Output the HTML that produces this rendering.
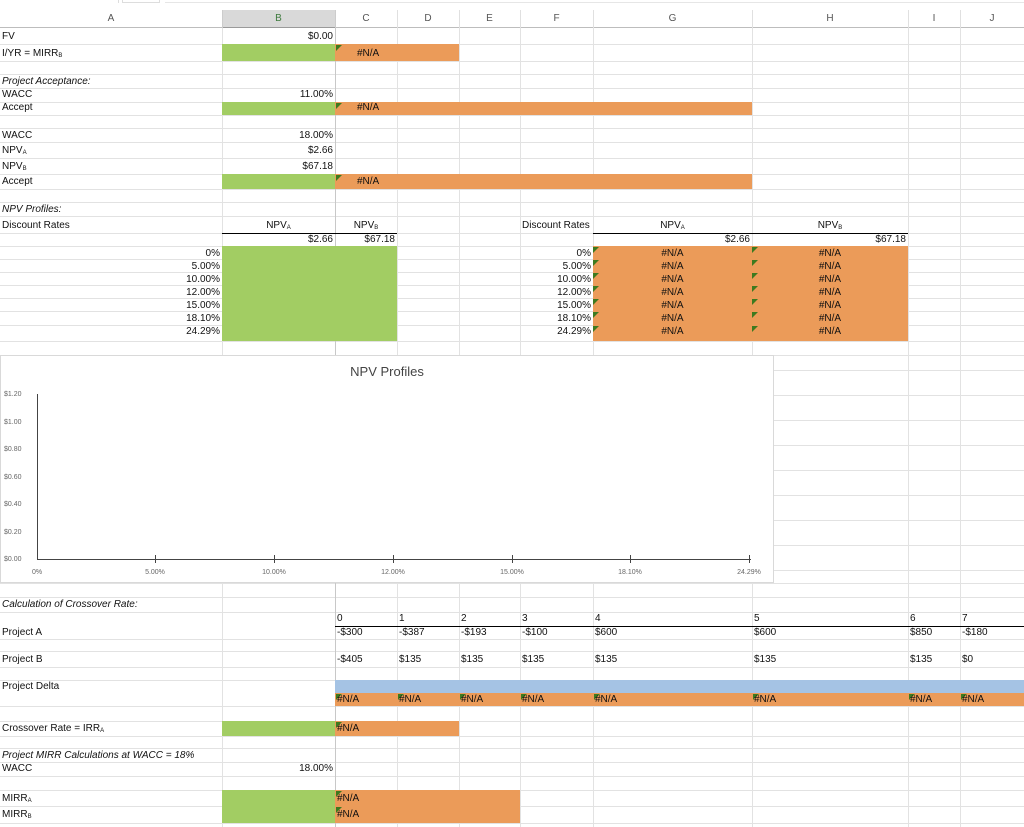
<!DOCTYPE html>
<html><head><meta charset="utf-8"><style>
*{margin:0;padding:0;box-sizing:border-box}
body{width:1024px;height:827px;overflow:hidden;background:#fff;font-family:"Liberation Sans",Arial,sans-serif;font-size:10px;color:#111;position:relative}
div{position:absolute}
.h{left:0;width:1024px;height:1px;background:#e2e2e2}
.v{width:1px;background:#e2e2e2;top:28px;height:799px}
.t{white-space:nowrap;line-height:12px}
.r{text-align:right}
.g{background:#a2cd63}
.o{background:#eb9b59}
.tri{width:0;height:0;border-top:6px solid #3d7a1f;border-right:6px solid transparent}
.i{font-style:italic}
sub{font-size:6px;vertical-align:-1px}
.ax{font-size:7px;color:#666}
</style></head><body>
<div style="left:0;top:0;width:1024px;height:10px;background:#fff"></div>
<div style="left:118px;top:0;width:1px;height:3px;background:#ddd"></div>
<div style="left:122px;top:0;width:38px;height:3px;border:1px solid #ddd;border-top:none"></div>
<div style="left:165px;top:2px;width:859px;height:1px;background:#e6e6e6"></div>
<div style="left:0;top:10px;width:1024px;height:18px;border-bottom:1px solid #bdbdbd"></div>
<div style="left:222px;top:10px;width:113px;height:18px;background:#d9d9d9;border-bottom:1px solid #9a9a9a"></div>
<div class="t" style="left:0;top:13px;width:222px;text-align:center;color:#555">A</div>
<div class="t" style="left:222px;top:13px;width:113px;text-align:center;color:#3d7a3d">B</div>
<div class="t" style="left:335px;top:13px;width:62px;text-align:center;color:#555">C</div>
<div class="t" style="left:397px;top:13px;width:62px;text-align:center;color:#555">D</div>
<div class="t" style="left:459px;top:13px;width:61px;text-align:center;color:#555">E</div>
<div class="t" style="left:520px;top:13px;width:73px;text-align:center;color:#555">F</div>
<div class="t" style="left:593px;top:13px;width:159px;text-align:center;color:#555">G</div>
<div class="t" style="left:752px;top:13px;width:156px;text-align:center;color:#555">H</div>
<div class="t" style="left:908px;top:13px;width:52px;text-align:center;color:#555">I</div>
<div class="t" style="left:960px;top:13px;width:64px;text-align:center;color:#555">J</div>
<div style="left:222px;top:10px;width:1px;height:18px;background:#ccc"></div>
<div style="left:335px;top:10px;width:1px;height:18px;background:#ccc"></div>
<div style="left:397px;top:10px;width:1px;height:18px;background:#e0e0e0"></div>
<div style="left:459px;top:10px;width:1px;height:18px;background:#e0e0e0"></div>
<div style="left:520px;top:10px;width:1px;height:18px;background:#e0e0e0"></div>
<div style="left:593px;top:10px;width:1px;height:18px;background:#e0e0e0"></div>
<div style="left:752px;top:10px;width:1px;height:18px;background:#e0e0e0"></div>
<div style="left:908px;top:10px;width:1px;height:18px;background:#e0e0e0"></div>
<div style="left:960px;top:10px;width:1px;height:18px;background:#e0e0e0"></div>

<div class="h" style="top:44px"></div><div class="h" style="top:61px"></div><div class="h" style="top:74px"></div><div class="h" style="top:88px"></div><div class="h" style="top:102px"></div><div class="h" style="top:115px"></div><div class="h" style="top:128px"></div><div class="h" style="top:142px"></div><div class="h" style="top:158px"></div><div class="h" style="top:174px"></div><div class="h" style="top:189px"></div><div class="h" style="top:202px"></div><div class="h" style="top:216px"></div><div class="h" style="top:233px"></div><div class="h" style="top:246px"></div><div class="h" style="top:259px"></div><div class="h" style="top:272px"></div><div class="h" style="top:285px"></div><div class="h" style="top:298px"></div><div class="h" style="top:311px"></div><div class="h" style="top:325px"></div><div class="h" style="top:341px"></div><div class="h" style="top:355px"></div><div class="h" style="top:370px"></div><div class="h" style="top:395px"></div><div class="h" style="top:420px"></div><div class="h" style="top:445px"></div><div class="h" style="top:470px"></div><div class="h" style="top:495px"></div><div class="h" style="top:520px"></div><div class="h" style="top:545px"></div><div class="h" style="top:570px"></div><div class="h" style="top:583px"></div><div class="h" style="top:597px"></div><div class="h" style="top:612px"></div><div class="h" style="top:639px"></div><div class="h" style="top:651px"></div><div class="h" style="top:667px"></div><div class="h" style="top:680px"></div><div class="h" style="top:706px"></div><div class="h" style="top:721px"></div><div class="h" style="top:736px"></div><div class="h" style="top:748px"></div><div class="h" style="top:762px"></div><div class="h" style="top:776px"></div><div class="h" style="top:790px"></div><div class="h" style="top:806px"></div><div class="h" style="top:823px"></div>
<div class="v" style="left:222px"></div><div class="v" style="left:335px;background:#c8c8c8"></div><div class="v" style="left:397px"></div><div class="v" style="left:459px"></div><div class="v" style="left:520px"></div><div class="v" style="left:593px"></div><div class="v" style="left:752px"></div><div class="v" style="left:908px"></div><div class="v" style="left:960px"></div>

<div class="g" style="left:222px;top:44px;width:113px;height:17px"></div>
<div class="o" style="left:335px;top:44px;width:124px;height:17px"></div>
<div class="g" style="left:222px;top:102px;width:113px;height:13px"></div>
<div class="o" style="left:335px;top:102px;width:417px;height:13px"></div>
<div class="g" style="left:222px;top:174px;width:113px;height:15px"></div>
<div class="o" style="left:335px;top:174px;width:417px;height:15px"></div>
<div class="g" style="left:222px;top:246px;width:175px;height:95px"></div>
<div class="o" style="left:593px;top:246px;width:315px;height:95px"></div>
<div style="left:335px;top:680px;width:689px;height:13px;background:#a5c3e4"></div>
<div class="o" style="left:335px;top:693px;width:689px;height:13px"></div>
<div class="g" style="left:222px;top:721px;width:113px;height:15px"></div>
<div class="o" style="left:335px;top:721px;width:124px;height:15px"></div>
<div class="g" style="left:222px;top:790px;width:113px;height:33px"></div>
<div class="o" style="left:335px;top:790px;width:185px;height:33px"></div>

<div class="tri" style="left:336px;top:45px"></div>
<div class="tri" style="left:336px;top:103px"></div>
<div class="tri" style="left:336px;top:175px"></div>
<div class="tri" style="left:593px;top:247px"></div><div class="tri" style="left:593px;top:260px"></div><div class="tri" style="left:593px;top:273px"></div><div class="tri" style="left:593px;top:286px"></div><div class="tri" style="left:593px;top:299px"></div><div class="tri" style="left:593px;top:312px"></div><div class="tri" style="left:593px;top:326px"></div>
<div class="tri" style="left:752px;top:247px"></div><div class="tri" style="left:752px;top:260px"></div><div class="tri" style="left:752px;top:273px"></div><div class="tri" style="left:752px;top:286px"></div><div class="tri" style="left:752px;top:299px"></div><div class="tri" style="left:752px;top:312px"></div><div class="tri" style="left:752px;top:326px"></div>
<div class="tri" style="left:336px;top:694px"></div><div class="tri" style="left:398px;top:694px"></div><div class="tri" style="left:460px;top:694px"></div><div class="tri" style="left:521px;top:694px"></div><div class="tri" style="left:594px;top:694px"></div><div class="tri" style="left:753px;top:694px"></div><div class="tri" style="left:909px;top:694px"></div><div class="tri" style="left:961px;top:694px"></div>
<div class="tri" style="left:336px;top:722px"></div><div class="tri" style="left:336px;top:791px"></div><div class="tri" style="left:336px;top:807px"></div>

<div style="left:222px;top:233px;width:175px;height:1px;background:#000"></div>
<div style="left:593px;top:233px;width:315px;height:1px;background:#000"></div>
<div style="left:335px;top:626px;width:689px;height:1px;background:#000"></div>

<div class="t" style="left:2px;top:31px">FV</div>
<div class="t" style="left:2px;top:48px">I/YR = MIRR<sub>B</sub></div>
<div class="t i" style="left:2px;top:76px">Project Acceptance:</div>
<div class="t" style="left:2px;top:89px">WACC</div>
<div class="t" style="left:2px;top:102px">Accept</div>
<div class="t" style="left:2px;top:130px">WACC</div>
<div class="t" style="left:2px;top:145px">NPV<sub>A</sub></div>
<div class="t" style="left:2px;top:161px">NPV<sub>B</sub></div>
<div class="t" style="left:2px;top:176px">Accept</div>
<div class="t i" style="left:2px;top:204px">NPV Profiles:</div>
<div class="t" style="left:2px;top:220px">Discount Rates</div>
<div class="t i" style="left:2px;top:599px">Calculation of Crossover Rate:</div>
<div class="t" style="left:2px;top:627px">Project A</div>
<div class="t" style="left:2px;top:654px">Project B</div>
<div class="t" style="left:2px;top:681px">Project Delta</div>
<div class="t" style="left:2px;top:723px">Crossover Rate = IRR<sub>A</sub></div>
<div class="t i" style="left:2px;top:750px">Project MIRR Calculations at WACC = 18%</div>
<div class="t" style="left:2px;top:763px">WACC</div>
<div class="t" style="left:2px;top:793px">MIRR<sub>A</sub></div>
<div class="t" style="left:2px;top:809px">MIRR<sub>B</sub></div>

<div class="t r" style="left:222px;width:111px;top:31px">$0.00</div>
<div class="t r" style="left:222px;width:111px;top:89px">11.00%</div>
<div class="t r" style="left:222px;width:111px;top:130px">18.00%</div>
<div class="t r" style="left:222px;width:111px;top:145px">$2.66</div>
<div class="t r" style="left:222px;width:111px;top:161px">$67.18</div>
<div class="t" style="left:222px;width:113px;top:220px;text-align:center">NPV<sub>A</sub></div>
<div class="t" style="left:335px;width:62px;top:220px;text-align:center">NPV<sub>B</sub></div>
<div class="t r" style="left:222px;width:111px;top:234px">$2.66</div>
<div class="t r" style="left:335px;width:60px;top:234px">$67.18</div>
<div class="t r" style="left:222px;width:111px;top:763px">18.00%</div>

<div class="t" style="left:357px;top:48px">#N/A</div>
<div class="t" style="left:357px;top:102px">#N/A</div>
<div class="t" style="left:357px;top:176px">#N/A</div>

<div class="t r" style="left:100px;width:120px;top:247px;line-height:13px">0%<br>5.00%<br>10.00%<br>12.00%<br>15.00%<br>18.10%<br>24.29%</div>
<div class="t" style="left:522px;top:220px">Discount Rates</div>
<div class="t" style="left:593px;width:159px;top:220px;text-align:center">NPV<sub>A</sub></div>
<div class="t" style="left:752px;width:156px;top:220px;text-align:center">NPV<sub>B</sub></div>
<div class="t r" style="left:593px;width:157px;top:234px">$2.66</div>
<div class="t r" style="left:752px;width:154px;top:234px">$67.18</div>
<div class="t r" style="left:480px;width:111px;top:247px;line-height:13px">0%<br>5.00%<br>10.00%<br>12.00%<br>15.00%<br>18.10%<br>24.29%</div>
<div class="t" style="left:593px;width:159px;top:247px;line-height:13px;text-align:center">#N/A<br>#N/A<br>#N/A<br>#N/A<br>#N/A<br>#N/A<br>#N/A</div>
<div class="t" style="left:752px;width:156px;top:247px;line-height:13px;text-align:center">#N/A<br>#N/A<br>#N/A<br>#N/A<br>#N/A<br>#N/A<br>#N/A</div>

<div style="left:0;top:355px;width:774px;height:228px;background:#fff;border:1px solid #d9d9d9"></div>
<div class="t" style="left:0;width:774px;top:366px;text-align:center;font-size:13px;color:#444">NPV Profiles</div>
<div style="left:37px;top:394px;width:1px;height:166px;background:#444"></div>
<div style="left:37px;top:559px;width:714px;height:1px;background:#444"></div>
<div class="t ax" style="left:4px;line-height:27.5px;top:381px">$1.20<br>$1.00<br>$0.80<br>$0.60<br>$0.40<br>$0.20<br>$0.00</div>
<div style="left:155px;top:555px;width:1px;height:8px;background:#444"></div>
<div style="left:274px;top:555px;width:1px;height:8px;background:#444"></div>
<div style="left:393px;top:555px;width:1px;height:8px;background:#444"></div>
<div style="left:512px;top:555px;width:1px;height:8px;background:#444"></div>
<div style="left:630px;top:555px;width:1px;height:8px;background:#444"></div>
<div style="left:749px;top:555px;width:1px;height:8px;background:#444"></div>
<div class="t ax" style="left:17px;width:40px;top:567px;text-align:center">0%</div>
<div class="t ax" style="left:135px;width:40px;top:567px;text-align:center">5.00%</div>
<div class="t ax" style="left:254px;width:40px;top:567px;text-align:center">10.00%</div>
<div class="t ax" style="left:373px;width:40px;top:567px;text-align:center">12.00%</div>
<div class="t ax" style="left:492px;width:40px;top:567px;text-align:center">15.00%</div>
<div class="t ax" style="left:610px;width:40px;top:567px;text-align:center">18.10%</div>
<div class="t ax" style="left:729px;width:40px;top:567px;text-align:center">24.29%</div>

<div class="t" style="left:337px;top:613px">0</div><div class="t" style="left:399px;top:613px">1</div><div class="t" style="left:461px;top:613px">2</div><div class="t" style="left:522px;top:613px">3</div><div class="t" style="left:595px;top:613px">4</div><div class="t" style="left:754px;top:613px">5</div><div class="t" style="left:910px;top:613px">6</div><div class="t" style="left:962px;top:613px">7</div>
<div class="t" style="left:337px;top:627px">-$300</div><div class="t" style="left:399px;top:627px">-$387</div><div class="t" style="left:461px;top:627px">-$193</div><div class="t" style="left:522px;top:627px">-$100</div><div class="t" style="left:595px;top:627px">$600</div><div class="t" style="left:754px;top:627px">$600</div><div class="t" style="left:910px;top:627px">$850</div><div class="t" style="left:962px;top:627px">-$180</div>
<div class="t" style="left:337px;top:654px">-$405</div><div class="t" style="left:399px;top:654px">$135</div><div class="t" style="left:461px;top:654px">$135</div><div class="t" style="left:522px;top:654px">$135</div><div class="t" style="left:595px;top:654px">$135</div><div class="t" style="left:754px;top:654px">$135</div><div class="t" style="left:910px;top:654px">$135</div><div class="t" style="left:962px;top:654px">$0</div>
<div class="t" style="left:337px;top:694px">#N/A</div><div class="t" style="left:399px;top:694px">#N/A</div><div class="t" style="left:461px;top:694px">#N/A</div><div class="t" style="left:522px;top:694px">#N/A</div><div class="t" style="left:595px;top:694px">#N/A</div><div class="t" style="left:754px;top:694px">#N/A</div><div class="t" style="left:910px;top:694px">#N/A</div><div class="t" style="left:962px;top:694px">#N/A</div>
<div class="t" style="left:337px;top:723px">#N/A</div>
<div class="t" style="left:337px;top:793px">#N/A</div>
<div class="t" style="left:337px;top:809px">#N/A</div>
</body></html>
